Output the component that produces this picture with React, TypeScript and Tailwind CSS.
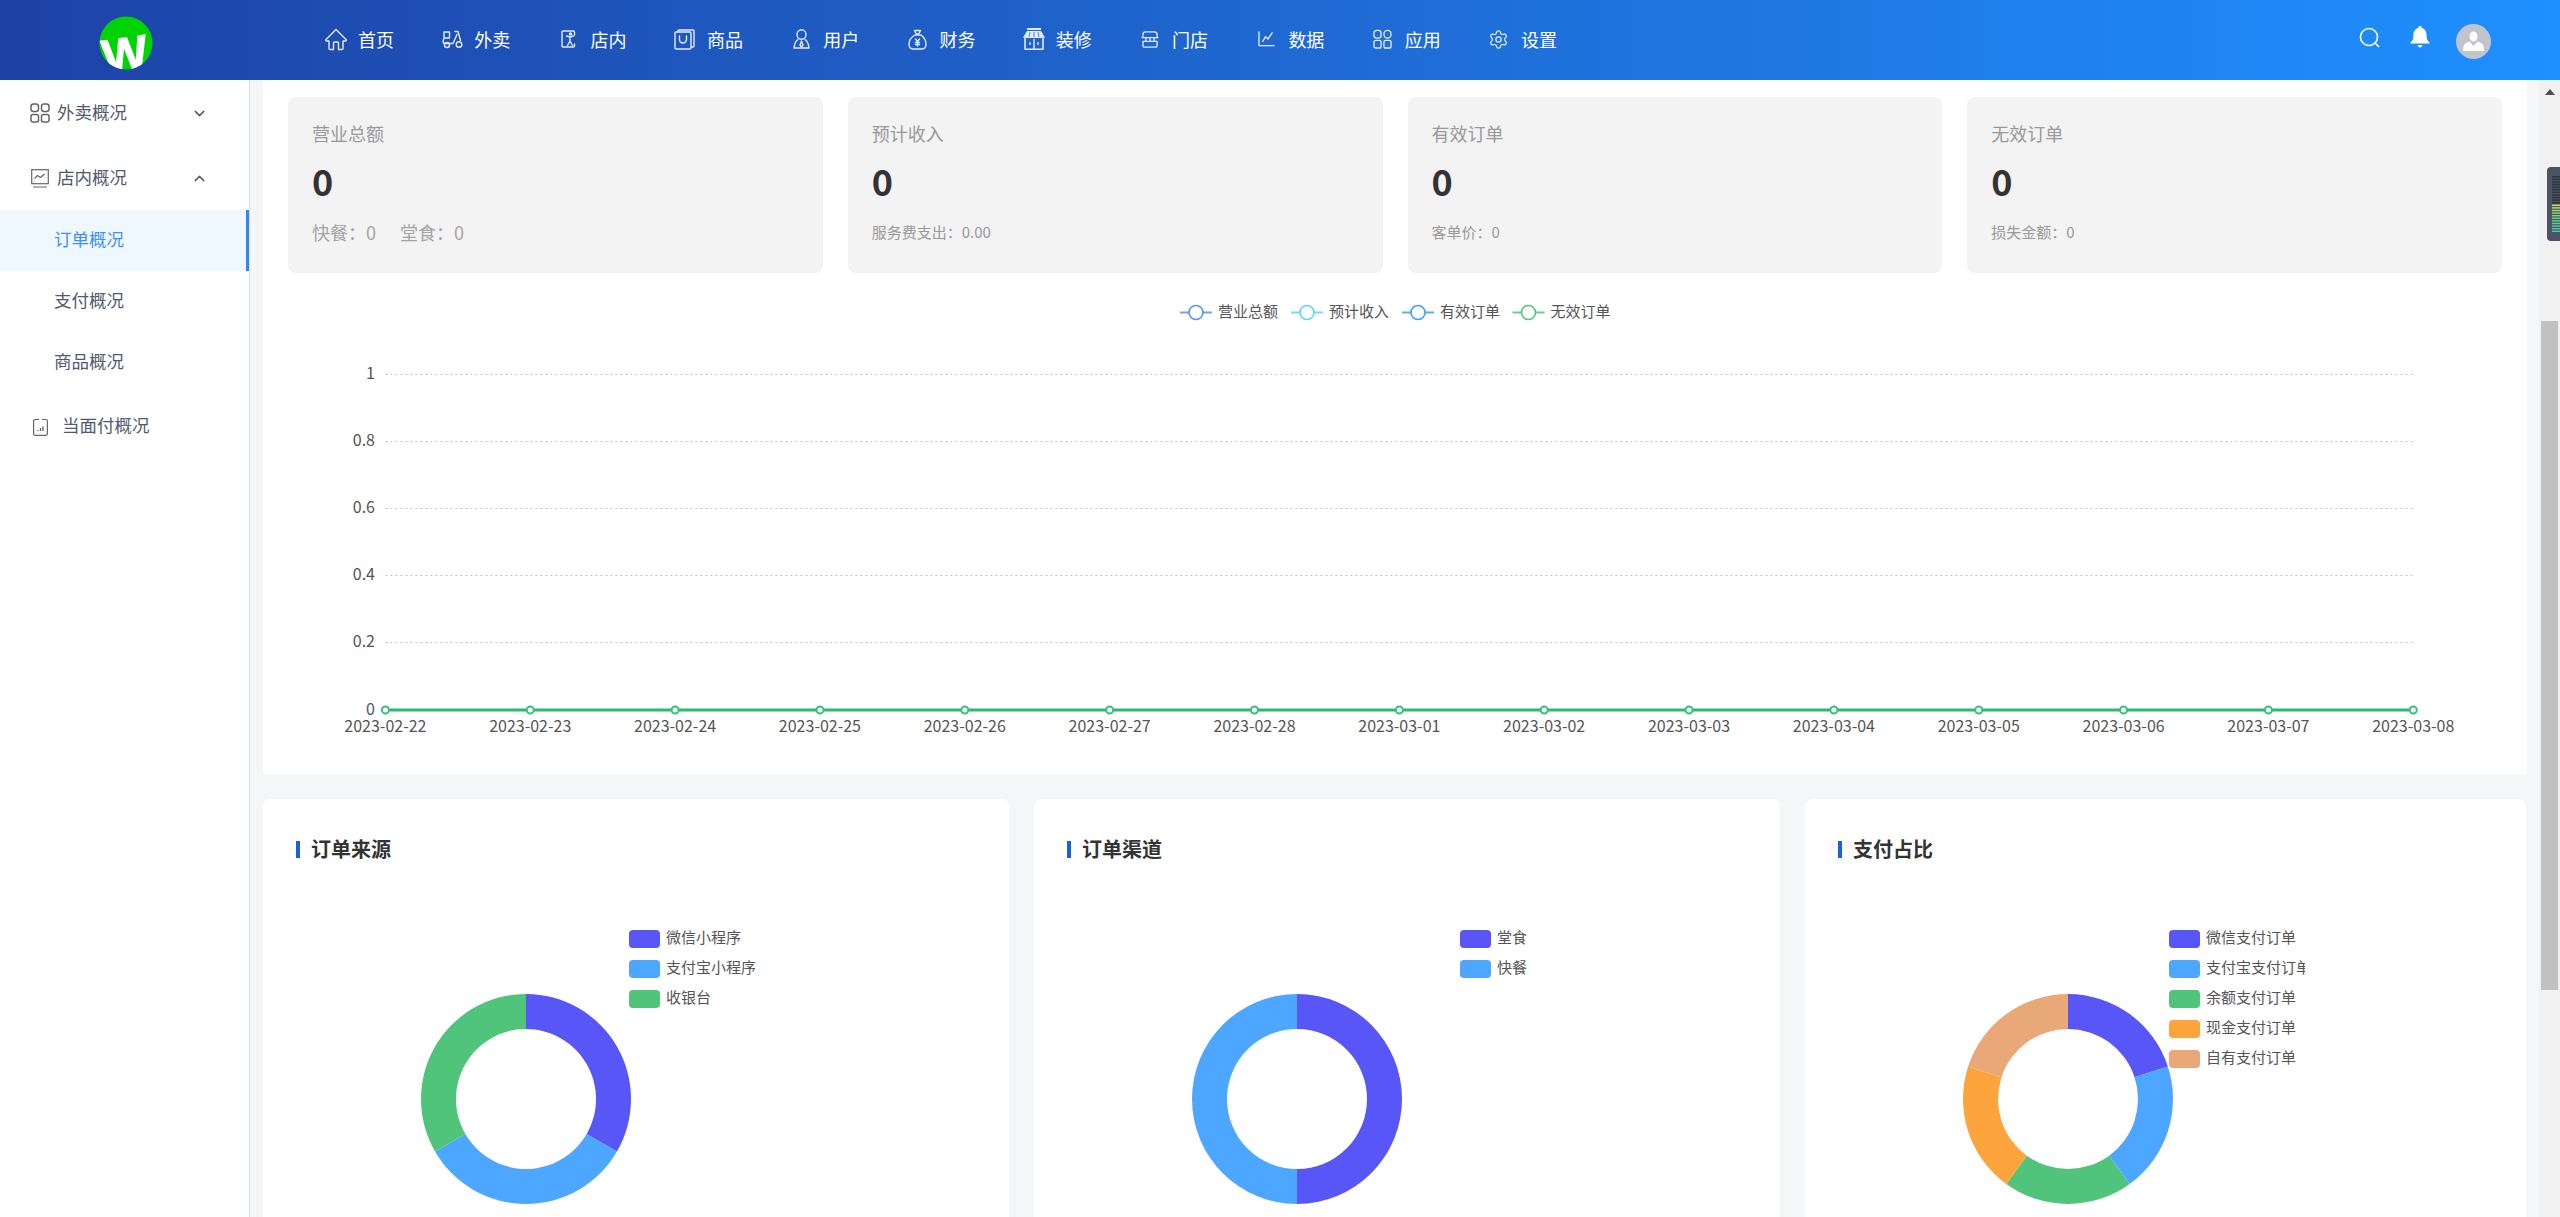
import React from 'react';
import { ChevronDown, ChevronUp, Settings } from 'lucide-react';

const ico = { fill: 'none', stroke: 'currentColor', strokeWidth: 1.4, strokeLinecap: 'round', strokeLinejoin: 'round' } as const;

// top nav icons, hand drawn since the packages don't carry these ones
const HomeIcon = () => (
  <svg width="24" height="23" viewBox="0 0 24 23" {...ico}>
    <path d="M12 1.500 2 11.500c-.6.7-.2 1.500.6 1.500H5v7.500c0 .6.4 1 1 1h3.500v-6.500c0-.6.4-1 1-1h3c.6 0 1 .4 1 1v6.500H18c.6 0 1-.4 1-1V13h2.400c.8 0 1.200-.8.6-1.500z" />
  </svg>
);
const ScooterIcon = () => (
  <svg width="21" height="19" viewBox="0 0 21 19" {...ico}>
    <path d="M2 2h5.500v6H2z" />
    <path d="M13 1.500h3l2.500 9" />
    <path d="M2 8.500c-1 2-1 4 0 5h9l4-9" />
    <circle cx="5" cy="15" r="2.500" />
    <circle cx="17" cy="14.500" r="2.800" />
  </svg>
);
const ShopIcon = () => (
  <svg width="16" height="18" viewBox="0 0 16 18" {...ico}>
    <path d="M13.500 5V2a1 1 0 0 0-1-1H2a1 1 0 0 0-1 1v14a1 1 0 0 0 1 1h10.500a1 1 0 0 0 1-1v-2" />
    <circle cx="9.500" cy="4" r="1" fill="currentColor" />
    <path d="M5.500 6 9 7l3.500-1M9 7v4l-2.500 4.500M9 11l2.500 4.500" />
  </svg>
);
const BagIcon = () => (
  <svg width="21" height="21" viewBox="0 0 21 21" {...ico}>
    <rect x="1" y="3" width="16" height="17" rx="1" />
    <path d="M4 3V2a1 1 0 0 1 1-1h14a1 1 0 0 1 1 1v15a1 1 0 0 1-1 1h-2" />
    <path d="M5.500 7v3.500a3.500 3.500 0 0 0 7 0V7" />
  </svg>
);
const UserTieIcon = () => (
  <svg width="17" height="20" viewBox="0 0 17 20" {...ico}>
    <ellipse cx="8.500" cy="5.500" rx="4.500" ry="4.800" />
    <path d="M5 10.500C2.500 12 1.500 15 1 19h15c-.5-4-1.500-7-4-8.500" />
    <path d="M8.500 12 7 16l1.500 2 1.500-2z" />
  </svg>
);
const MoneyBagIcon = () => (
  <svg width="19" height="21" viewBox="0 0 19 21" {...ico}>
    <path d="M6.500 1.500h6l-1.800 3.500h-2.400z" />
    <path d="M7 6C3.500 8 1 11.500 1 15c0 3.500 2 5 4 5h9c2 0 4-1.500 4-5 0-3.500-2.500-7-5-9z" />
    <path d="m7.500 10 2 2.500 2-2.500M9.500 12.500V17M7.500 13.500h4M7.500 15.500h4" />
  </svg>
);
const StoreIcon = () => (
  <svg width="24" height="22" viewBox="0 0 24 22">
    <rect x="5" y="0" width="14" height="2" fill="currentColor" />
    <path d="M5 3h14l4 6.500c0 .8-21 .8-22 0z" fill="currentColor" />
    <path d="M8 4 7 9M12 4v5M16 4l1 5" stroke="#2567d0" strokeWidth="0.8" />
    <path d="M3 10v10.500a.8.800 0 0 0 .8.800h16.400a.8.800 0 0 0 .8-.8V10" fill="none" stroke="currentColor" strokeWidth="1.600" />
    <path d="M12 11v10M8 14v3M16 14v3" fill="none" stroke="currentColor" strokeWidth="1.400" />
  </svg>
);
const JarIcon = () => (
  <svg width="18" height="17" viewBox="0 0 19 18" {...ico}>
    <path d="M2 7V4c0-1.500 1-3 3-3h9c2 0 3 1.500 3 3v3" />
    <path d="M1 7h17" />
    <path d="M2 11h15v4a2 2 0 0 1-2 2H4a2 2 0 0 1-2-2z" />
    <path d="M5 7v4M9.500 7v4M14 7v4" />
  </svg>
);
const TrendIcon = () => (
  <svg width="17" height="16" viewBox="0 0 18 17" {...ico}>
    <path d="M1 1v14.500h16" />
    <path d="m5 11 3-5 2.500 2.500L15 2" />
  </svg>
);
const AppsIcon = () => (
  <svg width="19" height="20" viewBox="0 0 20 21" {...ico}>
    <rect x="1" y="1.500" width="7.500" height="8" rx="3" />
    <rect x="11.500" y="1.500" width="7.500" height="8" rx="3.700" />
    <rect x="1" y="12" width="7.500" height="8" rx="2" />
    <rect x="11.500" y="12" width="7.500" height="8" rx="2" />
  </svg>
);

const navItems = [
  { label: '首页', icon: <HomeIcon /> },
  { label: '外卖', icon: <ScooterIcon /> },
  { label: '店内', icon: <ShopIcon /> },
  { label: '商品', icon: <BagIcon /> },
  { label: '用户', icon: <UserTieIcon /> },
  { label: '财务', icon: <MoneyBagIcon /> },
  { label: '装修', icon: <StoreIcon /> },
  { label: '门店', icon: <JarIcon /> },
  { label: '数据', icon: <TrendIcon /> },
  { label: '应用', icon: <AppsIcon /> },
  { label: '设置', icon: <Settings size={21} strokeWidth={1.4} /> },
];

const Logo = () => (
  <svg width="54" height="54" viewBox="0 0 54 54">
    <defs>
      <clipPath id="logo-clip">
        <circle cx="27" cy="27" r="26.500" />
      </clipPath>
    </defs>
    <circle cx="27" cy="27" r="26.500" fill="#00d400" />
    <g clipPath="url(#logo-clip)">
      <text x="26" y="55" textAnchor="middle" fontSize="48" fontWeight="700" fill="#fff" stroke="#fff" strokeWidth="1.200" fontFamily="'Liberation Sans', sans-serif" transform="rotate(-8 26 40)">W</text>
    </g>
  </svg>
);

function Header() {
  return (
    <header className="flex h-[80px] shrink-0 items-center bg-gradient-to-r from-[#1d42a6] to-[#1e90ff] text-white">
      <div className="flex w-[324px] shrink-0 pl-[99px] pt-[6px]">
        <Logo />
      </div>
      <nav className="flex items-center">
        {navItems.map((n) => (
          <div key={n.label} className="flex w-[116.3px] items-center gap-[10px]">
            <span className="flex w-[24px] -translate-y-px justify-center text-[#e3ebfb]">{n.icon}</span>
            <span className="-translate-y-px text-[18px] leading-6">{n.label}</span>
          </div>
        ))}
      </nav>
      <div className="ml-auto flex items-center pr-[69px]">
        <svg width="21" height="21" viewBox="0 0 21 21" fill="none" stroke="#fff" strokeWidth="1.600" strokeLinecap="round" className="-translate-y-[3px]">
          <circle cx="10" cy="10" r="8.500" />
          <path d="m16 16 3.500 3.500" />
        </svg>
        <svg width="20" height="22" viewBox="0 0 20 22" fill="#fff" className="ml-[30px] -translate-y-[3px]">
          <path d="M10 0c1 0 1.600.7 1.600 1.700C14.700 2.500 16.500 5 16.500 8.500c0 3.500.5 6.500 3 8v1H.5v-1c2.500-1.500 3-4.500 3-8 0-3.500 1.800-6 4.900-6.800C8.400.7 9 0 10 0z" />
          <path d="M7.500 19h5c-.3 1.600-1.300 2.500-2.500 2.500S7.800 20.600 7.500 19z" />
        </svg>
        <div className="ml-[26px] mt-[3px] flex h-[35px] w-[35px] items-center justify-center rounded-full bg-[#c0c4cc]">
          <svg width="21" height="21" viewBox="0 0 21 21" fill="#fff">
            <ellipse cx="10.500" cy="5.500" rx="4" ry="5" />
            <path d="M6.500 10.500 10.500 15l4-4.500c2.500.8 5 2 6 4.500l.5 5H0l.5-5c1-2.500 3.500-3.700 6-4.500z" />
          </svg>
        </div>
      </div>
    </header>
  );
}

function Sidebar() {
  return (
    <aside className="flex w-[250px] shrink-0 flex-col border-r border-[#dcdee2] bg-white text-[17.5px] text-[#515a6e]">
      <div className="flex h-[66px] shrink-0 items-center pl-[30px]">
        <svg width="20" height="20" viewBox="0 0 20 20" fill="none" stroke="#666" strokeWidth="1.500">
          <rect x="1" y="1" width="7.500" height="7.500" rx="2.500" />
          <rect x="11.500" y="1" width="7.500" height="7.500" rx="2.500" />
          <rect x="1" y="11.500" width="7.500" height="7.500" rx="2" />
          <rect x="11.500" y="11.500" width="7.500" height="7.500" rx="2" />
        </svg>
        <span className="ml-[7px] -translate-y-px">外卖概况</span>
        <ChevronDown size={17} strokeWidth={2} className="ml-[64px]" />
      </div>
      <div className="flex h-[64px] shrink-0 items-center pl-[31px]">
        <svg width="18" height="19" viewBox="0 0 18 19" fill="none" stroke="#666" strokeWidth="1.200">
          <rect x="0.700" y="0.700" width="16.600" height="14" />
          <path d="m3.500 9.500 3-3 3 2 4-3.500M2 18h14" />
        </svg>
        <span className="ml-[8px] -translate-y-px">店内概况</span>
        <ChevronUp size={17} strokeWidth={2} className="ml-[64px]" />
      </div>
      <div className="flex h-[61px] shrink-0 items-center border-r-[3px] border-[#2b88fb] bg-[#f0f8ff] pl-[54px] text-[#3f8ff7]">
        <span className="-translate-y-px">订单概况</span>
      </div>
      <div className="flex h-[61px] shrink-0 items-center pl-[54px]">
        <span className="-translate-y-px">支付概况</span>
      </div>
      <div className="flex h-[61px] shrink-0 items-center pl-[54px]">
        <span className="-translate-y-px">商品概况</span>
      </div>
      <div className="flex h-[67px] shrink-0 items-center pl-[33px]">
        <svg width="15" height="18" viewBox="0 0 15 18" fill="none" stroke="#666" strokeWidth="1.200">
          <rect x="0.600" y="1.500" width="13.800" height="15.800" rx="1.500" />
          <path d="M6 1.500h3" stroke="#fff" strokeWidth="2" />
          <path d="M5 13v-1M7.500 13v-3M10 13V8.500" strokeWidth="1.300" />
        </svg>
        <span className="ml-[14px] -translate-y-px">当面付概况</span>
      </div>
    </aside>
  );
}

const StatCard = ({ title, children }: { title: string; children: React.ReactNode }) => (
  <div className="h-[176px] rounded-lg bg-[#f3f3f3] pl-[24px] pt-[24px]">
    <div className="text-[18px] leading-6 text-[#999]">{title}</div>
    <div className="mt-[15px] text-[36px] font-bold leading-10 text-[#333]">0</div>
    <div className="mt-5 flex h-6 items-center">{children}</div>
  </div>
);

const xDates = [
  '2023-02-22', '2023-02-23', '2023-02-24', '2023-02-25', '2023-02-26',
  '2023-02-27', '2023-02-28', '2023-03-01', '2023-03-02', '2023-03-03',
  '2023-03-04', '2023-03-05', '2023-03-06', '2023-03-07', '2023-03-08',
];
const seriesLegend = [
  { label: '营业总额', color: '#5b8ff9', x: 1180 },
  { label: '预计收入', color: '#5ad8fb', x: 1291 },
  { label: '有效订单', color: '#3f9dfb', x: 1402 },
  { label: '无效订单', color: '#4fc878', x: 1512.5 },
];

// the trend chart, page coordinates kept in the viewBox so numbers read like the screenshot
function TrendChart() {
  const x0 = 385.4;
  const step = 144.85;
  const xEnd = x0 + step * 14;
  return (
    <svg viewBox="263 273 2264 501" className="block h-[501px] w-[2264px]">
      {seriesLegend.map((s) => (
        <g key={s.label}>
          <line x1={s.x} x2={s.x + 32} y1="312.500" y2="312.500" stroke={s.color} strokeWidth="2" opacity="0.85" />
          <circle cx={s.x + 16} cy="312.500" r="7" fill="#fff" stroke={s.color} strokeWidth="1.600" />
          <text x={s.x + 38} y="310.500" fontSize="15" fill="#555" dominantBaseline="central">{s.label}</text>
        </g>
      ))}
      {['1', '0.8', '0.6', '0.4', '0.2', '0'].map((v, i) => {
        const y = Math.round(374 + i * 67.1) + 0.5;
        return (
          <g key={v}>
            {i < 5 && <line x1={x0} x2={xEnd} y1={y} y2={y} stroke="#c4c4c4" strokeWidth="1" strokeDasharray="2 3" />}
            <text x="375" y={y - 2.500} fontSize="16" fill="#555" textAnchor="end" dominantBaseline="central">{v}</text>
          </g>
        );
      })}
      <line x1={x0} x2={xEnd} y1="710" y2="710" stroke="#2fb96f" strokeWidth="3" />
      {xDates.map((d, i) => (
        <g key={d}>
          <circle cx={x0 + i * step} cy="710" r="3.500" fill="#fff" stroke="#37c07f" strokeWidth="2" />
          <text x={x0 + i * step} y="725" fontSize="16" fill="#555" textAnchor="middle" dominantBaseline="central">{d}</text>
        </g>
      ))}
    </svg>
  );
}

const PURPLE = '#5856f7';
const BLUE = '#4da6ff';
const GREEN = '#50c47a';
const ORANGE = '#fda43d';
const TAN = '#e9a878';

function arc(startDeg: number, endDeg: number, R: number, r: number) {
  const pt = (deg: number, rad: number) => {
    const a = ((deg - 90) * Math.PI) / 180;
    return `${105 + rad * Math.cos(a)} ${105 + rad * Math.sin(a)}`;
  };
  const large = endDeg - startDeg > 180 ? 1 : 0;
  return `M${pt(startDeg, R)}A${R} ${R} 0 ${large} 1 ${pt(endDeg, R)}L${pt(endDeg, r)}A${r} ${r} 0 ${large} 0 ${pt(startDeg, r)}Z`;
}

function PieCard({ title, legendLeft, width, items }: { title: string; legendLeft: string; width: string; items: { label: string; color: string }[] }) {
  const slice = 360 / items.length;
  return (
    <div className={`relative h-[500px] shrink-0 rounded-lg bg-white pl-[33px] pt-[42px] ${width}`}>
      <div className="flex h-[17px] items-center">
        <span className="h-[17px] w-[4px] bg-[#1d5fd6]" />
        <span className="ml-[11px] -translate-y-px text-[20px] font-bold leading-6 text-[#333]">{title}</span>
      </div>
      <svg width="210" height="210" viewBox="0 0 210 210" className="ml-[124.500px] mt-[136px]">
        {items.map((it, i) => (
          <path key={it.label} d={arc(i * slice, (i + 1) * slice, 105, 70)} fill={it.color} />
        ))}
      </svg>
      <div className={`absolute top-[131px] flex flex-col gap-[12px] ${legendLeft}`}>
        {items.map((it) => (
          <div key={it.label} className="flex h-[18px] items-center whitespace-nowrap">
            <span className={`h-[18px] w-[31px] shrink-0 rounded-[4px] ${it.color === PURPLE ? 'bg-[#5856f7]' : it.color === BLUE ? 'bg-[#4da6ff]' : it.color === GREEN ? 'bg-[#50c47a]' : it.color === ORANGE ? 'bg-[#fda43d]' : 'bg-[#e9a878]'}`} />
            {/* the screenshot cuts the longest label at 99px */}
            <span className="ml-[6px] h-[22px] max-w-[99px] -translate-y-[2px] overflow-hidden text-[15px] leading-[22px] text-[#555]">{it.label}</span>
          </div>
        ))}
      </div>
    </div>
  );
}

function Scrollbar() {
  const ticks = ['#2e333e', '#2e333e', '#2e333e', '#2e333e', '#2e333e', '#2e333e', '#2e333e', '#2e333e', '#2e333e', '#2e333e', '#2e333e',
    '#d8e04f', '#bfe05c', '#a5dd66', '#8edb6e', '#7cd97a', '#6cd784', '#5fd58e', '#55d398', '#4cd2a2', '#45d0aa', '#40cfb2'];
  return (
    <div className="relative flex w-[21px] shrink-0 flex-col items-center bg-[#f1f1f1]">
      <svg width="10" height="6" viewBox="0 0 10 6" className="mt-[9px]">
        <path d="M5 0 10 6H0z" fill="#505050" />
      </svg>
      <div className="mt-[226px] h-[669px] w-[17px] bg-[#c1c1c1]" />
      {/* meter widget of some browser extension sitting over the bar */}
      <svg width="13" height="74" viewBox="0 0 13 74" className="absolute left-[8px] top-[87px]">
        <path d="M13 0H4a4 4 0 0 0-4 4v66a4 4 0 0 0 4 4h9z" fill="#4c5261" />
        {ticks.map((c, i) => (
          <rect key={i} x="5" y={9 + i * 2.6} width="8" height="1.400" fill={c} />
        ))}
      </svg>
    </div>
  );
}

export default function App() {
  return (
    <div className="flex h-[1217px] w-[2560px] flex-col overflow-hidden bg-white font-['Noto_Sans_CJK_SC','Liberation_Sans',sans-serif]">
      <Header />
      <div className="flex min-h-0 flex-1">
        <Sidebar />
        <main className="min-w-0 flex-1 overflow-hidden bg-[#f5f6f8] pl-[13px]">
          <div className="w-[2264px] bg-white">
            <div className="grid grid-cols-4 gap-[25px] px-[25px] pt-[17px]">
              <StatCard title="营业总额">
                <span className="mr-6 text-[18px] text-[#a3a3a3]">快餐：0</span>
                <span className="text-[18px] text-[#a3a3a3]">堂食：0</span>
              </StatCard>
              <StatCard title="预计收入">
                <span className="text-[15px] text-[#999]">服务费支出：0.00</span>
              </StatCard>
              <StatCard title="有效订单">
                <span className="text-[15px] text-[#999]">客单价：0</span>
              </StatCard>
              <StatCard title="无效订单">
                <span className="text-[15px] text-[#999]">损失金额：0</span>
              </StatCard>
            </div>
            <TrendChart />
          </div>
          <div className="mt-[25px] flex w-[2264px] gap-[25px]">
            <PieCard
              title="订单来源"
              width="w-[746px]"
              legendLeft="left-[366px]"
              items={[
                { label: '微信小程序', color: PURPLE },
                { label: '支付宝小程序', color: BLUE },
                { label: '收银台', color: GREEN },
              ]}
            />
            <PieCard
              title="订单渠道"
              width="w-[746px]"
              legendLeft="left-[426px]"
              items={[
                { label: '堂食', color: PURPLE },
                { label: '快餐', color: BLUE },
              ]}
            />
            <PieCard
              title="支付占比"
              width="w-[721px]"
              legendLeft="left-[364px]"
              items={[
                { label: '微信支付订单', color: PURPLE },
                { label: '支付宝支付订单', color: BLUE },
                { label: '余额支付订单', color: GREEN },
                { label: '现金支付订单', color: ORANGE },
                { label: '自有支付订单', color: TAN },
              ]}
            />
          </div>
        </main>
        <Scrollbar />
      </div>
    </div>
  );
}
